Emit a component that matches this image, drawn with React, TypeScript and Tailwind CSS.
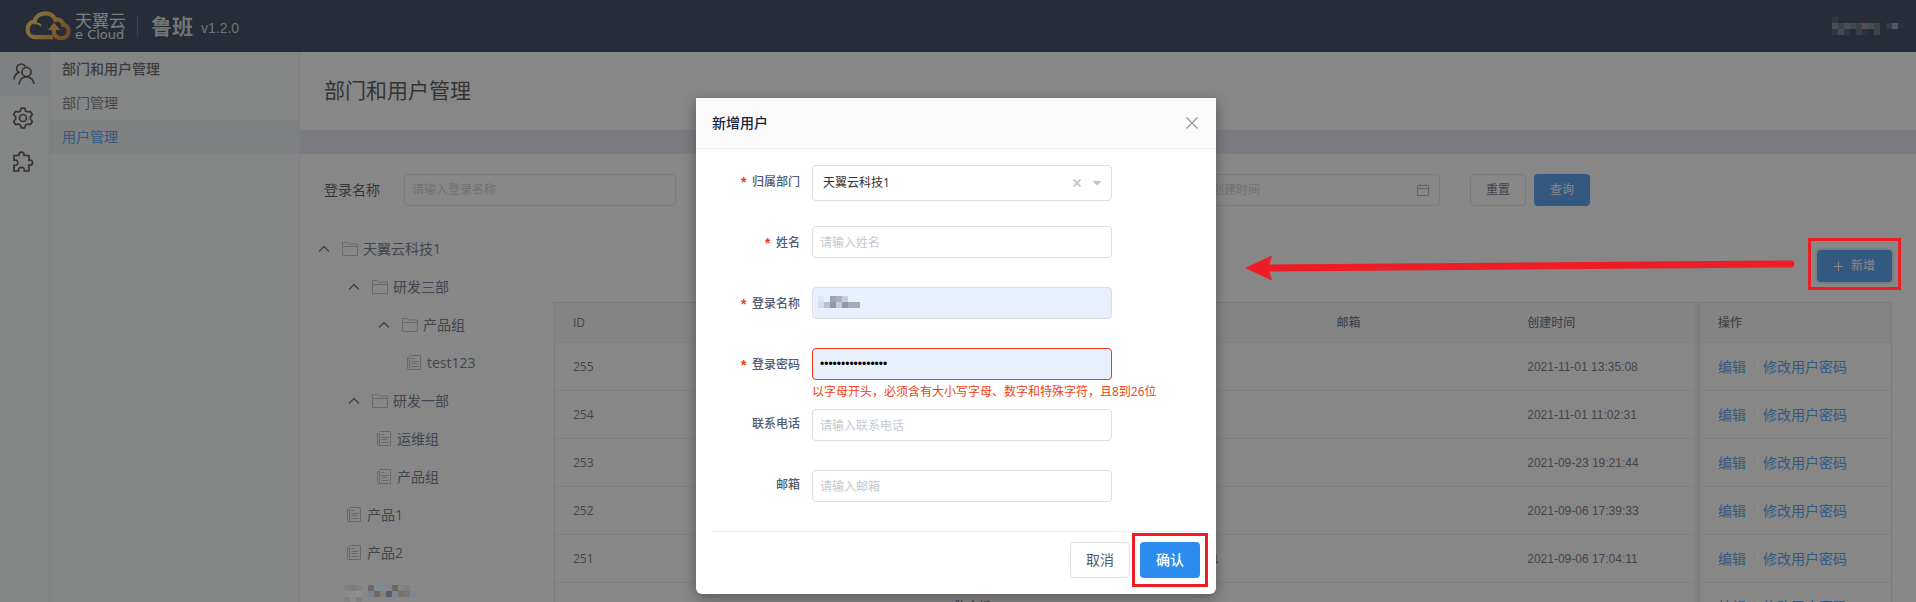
import React, { useState } from 'react';

const RED = '#ee1c24';

type Cell = [number, number, string];

function Mosaic({ cells, width, height, label }: { cells: Cell[]; width: number; height: number; label: string }) {
  return (
    <svg width={width} height={height} viewBox={`0 0 ${width} ${height}`} shapeRendering="crispEdges" role="img" aria-label={label} className="shrink-0">
      {cells.map(([x, y, fill]) => (
        <rect key={`${x}-${y}`} x={x * 6} y={y * 6} width={6} height={6} fill={fill} />
      ))}
    </svg>
  );
}

const accountCells: Cell[] = [
  [0, 0, '#303843'],
  [0, 1, '#465057'], [1, 1, '#3f3f45'], [2, 1, '#454f59'], [3, 1, '#3f4851'], [4, 1, '#3a434d'], [5, 1, '#5a4d56'], [6, 1, '#47504f'], [7, 1, '#3f4246'],
  [9, 1, '#2b3c4b'], [10, 1, '#53575c'], [11, 1, '#2a313c'],
  [0, 2, '#2e3946'], [1, 2, '#434f4d'], [2, 2, '#2d3641'], [4, 2, '#363e48'], [5, 2, '#2a313d'], [7, 2, '#3e4446'],
];

const treeIconCells: Cell[] = [
  [0, 0, '#7f7f7f'], [1, 0, '#7c7c7c'], [2, 0, '#808282'],
  [0, 1, '#8a8c8c'], [1, 1, '#8b8e8f'], [2, 1, '#8d9090'],
  [0, 2, '#808080'], [1, 2, '#8a8b8c'], [2, 2, '#7e7e7e'],
];

const treeNameCells: Cell[] = [
  [0, 0, '#6c676b'], [1, 0, '#808a95'], [2, 0, '#808a95'], [3, 0, '#83878a'], [4, 0, '#6a6a64'], [5, 0, '#838482'], [6, 0, '#817f77'],
  [0, 1, '#7a8388'], [1, 1, '#6b6b69'], [2, 1, '#8b7e75'], [3, 1, '#56606a'], [4, 1, '#80868c'], [5, 1, '#727470'], [6, 1, '#7d7572'], [7, 1, '#7c868d'],
];

const loginCells: Cell[] = [
  [0, 0, '#dde5f3'], [2, 0, '#9fa6b3'], [3, 0, '#a9aebb'], [4, 0, '#c8cedb'],
  [0, 1, '#d5dcea'], [1, 1, '#b9c0cd'], [2, 1, '#9299a6'], [3, 1, '#c4c9d8'], [4, 1, '#9299a4'], [5, 1, '#a4aab6'], [6, 1, '#a4aab6'],
];

function CloudLogo() {
  return (
    <svg width="46" height="30" viewBox="0 0 46 30" fill="none" aria-hidden="true">
      <defs>
        <linearGradient id="gold" x1="0" y1="0" x2="46" y2="30" gradientUnits="userSpaceOnUse">
          <stop offset="0" stopColor="#ffd84a" />
          <stop offset="0.5" stopColor="#f2a928" />
          <stop offset="1" stopColor="#cc5a00" />
        </linearGradient>
      </defs>
      <path
        d="M28 26.2H10.5C5.6 26.2 2.600 22.6 2.600 18.2C2.600 13.9 5.600 10.8 9.600 10.3C10.600 5.4 15 2.400 20.300 2.400C25.100 2.400 28.700 4.800 30.300 8.800C34.800 7.800 37.600 10 38.200 13.800C41.700 14.500 43.600 17 43.600 20.300C43.600 24.600 40.200 27.200 36.300 27.200C32 27.200 29 24.900 29 21V16"
        stroke="url(#gold)"
        strokeWidth="4.200"
      />
      <path d="M9.300 12.500C12.500 11.800 14.600 13 16 15" stroke="url(#gold)" strokeWidth="2" />
      <path d="M29 11.500L35 19H23Z" fill="#f2a020" />
    </svg>
  );
}

function PeopleIcon() {
  return (
    <svg width="22" height="22" viewBox="0 0 22 22" fill="none" stroke="#303133" strokeWidth="1.7" aria-hidden="true">
      <circle cx="13.500" cy="9" r="4.600" />
      <path d="M6.200 21.500C6.400 16.800 9.500 13.800 13.500 13.800C17.500 13.800 20.600 16.800 20.900 21" />
      <path d="M12.200 3.200C11.300 1.700 9.800 1 8.200 1C5.600 1 3.600 3 3.600 5.500C3.600 7.200 4.500 8.600 5.900 9.400C3 10.600 1.300 13 1.100 16.500" />
    </svg>
  );
}

function GearIcon() {
  return (
    <svg width="22" height="22" viewBox="0 0 22 22" fill="none" stroke="#303133" strokeWidth="1.700" strokeLinejoin="round" aria-hidden="true">
      <path d="M9.200 1.200H12.800L13.600 3.900L15.600 5L18.400 4.400L20.300 7.500L18.400 9.700V12.300L20.300 14.500L18.400 17.600L15.600 17L13.600 18.100L12.800 20.800H9.200L8.400 18.100L6.400 17L3.600 17.600L1.700 14.500L3.600 12.300V9.700L1.700 7.500L3.600 4.400L6.400 5L8.400 3.900Z" />
      <circle cx="11" cy="11" r="3.500" />
    </svg>
  );
}

function PuzzleIcon() {
  return (
    <svg width="22" height="22" viewBox="0 0 22 22" fill="none" stroke="#303133" strokeWidth="1.700" aria-hidden="true">
      <path d="M2 4.500H7C6.500 2.600 7.700 1.200 9.500 1.200C11.300 1.200 12.500 2.600 12 4.500H17V9.200C18.900 8.700 20.600 9.700 20.600 11.600C20.600 13.500 18.900 14.500 17 14V20H12.300C12.800 17.800 11.500 16.300 9.500 16.300C7.500 16.300 6.200 17.800 6.700 20H2V14.300C4.200 14.800 5.800 13.500 5.800 11.700C5.800 9.900 4.200 8.600 2 9.100Z" />
    </svg>
  );
}

function FolderIcon() {
  return (
    <svg width="16" height="14" viewBox="0 0 16 14" fill="none" stroke="#b3b5b8" aria-hidden="true">
      <path d="M0.500 13.500V0.500H5L6.500 2H15.500V13.500ZM0.500 4.500H15.500" />
    </svg>
  );
}

function DocIcon() {
  return (
    <svg width="14" height="16" viewBox="0 0 14 16" fill="none" stroke="#b3b5b8" aria-hidden="true">
      <path d="M2.500 0.500H13.500V14.500H1.500C0.900 14.500 0.500 14.100 0.500 13.500V2.500H2.500V14M4.500 3.500H7.500M4.500 6.500H11.500M4.500 8.500H10M4.500 11.500H11.500" />
    </svg>
  );
}

type Node = { name: string; indent: string; leaf?: boolean };

const nodes: Node[] = [
  { name: '天翼云科技1', indent: 'pl-0' },
  { name: '研发三部', indent: 'pl-[30px]' },
  { name: '产品组', indent: 'pl-[60px]' },
  { name: 'test123', indent: 'pl-[89px]', leaf: true },
  { name: '研发一部', indent: 'pl-[30px]' },
  { name: '运维组', indent: 'pl-[59px]', leaf: true },
  { name: '产品组', indent: 'pl-[59px]', leaf: true },
  { name: '产品1', indent: 'pl-[29px]', leaf: true },
  { name: '产品2', indent: 'pl-[29px]', leaf: true },
];

function Tree() {
  return (
    <ul className="-ml-1.5 w-[236px] shrink-0 text-sm text-[#515a6e]">
      {nodes.map((n, i) => (
        <li key={i} className={`flex h-[38px] items-center ${n.indent}`}>
          {n.leaf ? (
            <span className="mr-1.5 flex">
              <DocIcon />
            </span>
          ) : (
            <>
              <button type="button" aria-label={`收起${n.name}`} className="mr-3 flex w-3">
                <svg width="12" height="8" viewBox="0 0 12 8" fill="none" stroke="#515a6e" strokeWidth="1.500">
                  <path d="M1 6.500L6 1.500L11 6.500" />
                </svg>
              </button>
              <span className="mr-[5px] flex">
                <FolderIcon />
              </span>
            </>
          )}
          <span>{n.name}</span>
        </li>
      ))}
      <li className="relative z-20 flex items-start gap-1.5 pt-[13px] pl-[26px]">
        <Mosaic cells={treeIconCells} width={18} height={18} label="图标" />
        <Mosaic cells={treeNameCells} width={48} height={12} label="部门" />
      </li>
    </ul>
  );
}

const rows = [
  { id: '255', name: '', phone: '', time: '2021-11-01 13:35:08' },
  { id: '254', name: '', phone: '', time: '2021-11-01 11:02:31' },
  { id: '253', name: '', phone: '', time: '2021-09-23 19:21:44' },
  { id: '252', name: '', phone: '', time: '2021-09-06 17:39:33' },
  { id: '251', name: '', phone: '13800000001', time: '2021-09-06 17:04:11' },
  { id: '', name: '陈金斌', phone: '', time: '' },
];

const columns = ['ID', '登录名称', '姓名', '联系电话', '邮箱', '创建时间', '操作'];

const cell = 'border-b border-[#e8eaec] pl-[18px]';
const lastScrollingCell = 'border-r border-r-[#e0e2e5] bg-[linear-gradient(to_left,rgba(0,0,0,0.1),transparent_6px)]';

function UserTable() {
  return (
    <table className="w-full table-fixed border-separate border-spacing-0 border border-b-0 border-[#dcdee2] text-left text-xs text-[#515a6e]">
      <thead>
        <tr className="h-10 bg-[#f8f8f9]">
          {columns.map((c, i) => (
            <th key={c} className={`${cell} font-medium ${i === 5 ? lastScrollingCell : ''}`}>
              {c}
            </th>
          ))}
        </tr>
      </thead>
      <tbody>
        {rows.map((r) => (
          <tr key={r.id} className="h-12">
            <td className={cell}>{r.id}</td>
            <td className={cell} />
            <td className={cell}>{r.name}</td>
            <td className={`${cell} font-['Liberation_Sans',sans-serif]`}>{r.phone}</td>
            <td className={cell} />
            <td className={`${cell} ${lastScrollingCell} font-['Liberation_Sans',sans-serif]`}>{r.time}</td>
            <td className={`${cell} text-sm whitespace-nowrap`}>
              <div className="flex items-center gap-2">
                <a href="#edit" className="text-[#2d8cf0]">编辑</a>
                <span className="h-3 w-px bg-[#e8eaec]" />
                <a href="#password" className="text-[#2d8cf0]">修改用户密码</a>
              </div>
            </td>
          </tr>
        ))}
      </tbody>
    </table>
  );
}

function Filter({ id, label, placeholder, date }: { id: string; label: string; placeholder: string; date?: boolean }) {
  return (
    <div className="flex items-center">
      <label htmlFor={id} className="w-20 text-sm text-[#303133]">{label}</label>
      <div className="flex h-8 w-[272px] items-center rounded border border-[#dcdee2] bg-white px-[7px]">
        <input id={id} placeholder={placeholder} className="min-w-0 flex-1 bg-transparent text-xs outline-none placeholder:text-[#c5c8ce]" />
        {date && (
          <svg width="14" height="14" viewBox="0 0 14 14" fill="none" stroke="#a8abb2" className="mr-0.5" aria-hidden="true">
            <path d="M1.500 2.500H12.500V12.500H1.500ZM1.500 5.500H12.500M4.500 1V3M9.500 1V3" />
          </svg>
        )}
      </div>
    </div>
  );
}

function FormRow({ id, label, required, children }: { id: string; label: string; required?: boolean; children: React.ReactNode }) {
  return (
    <div className="flex h-8 items-start">
      <label htmlFor={id} className="flex w-[88px] shrink-0 items-center justify-end gap-1 pt-1.5 text-xs leading-[18px] font-medium text-[#515a6e]">
        {required && <span className="pt-1 font-['Liberation_Mono',monospace] text-sm leading-[18px] font-bold text-[#ed4014]">*</span>}
        {label}
      </label>
      <div className="relative ml-3 w-[300px]">{children}</div>
    </div>
  );
}

const inputBase = 'h-8 w-full rounded border px-[7px] text-xs outline-none placeholder:text-[#c5c8ce]';

function Modal() {
  const [password, setPassword] = useState('abcdEFGH12345678');
  return (
    <div role="dialog" aria-labelledby="modal-title" className="w-[520px] rounded-b-md bg-white shadow-[0_4px_14px_rgba(0,0,0,0.35)]">
      <div className="flex h-[51px] items-center justify-between border-b border-[#e8eaec] bg-[#fafafa] px-4">
        <h2 id="modal-title" className="text-sm font-medium text-[#17233d]">新增用户</h2>
        <button type="button" aria-label="关闭" className="mr-0.5">
          <svg width="12" height="12" viewBox="0 0 12 12" stroke="#999" strokeWidth="1.200">
            <path d="M0.500 0.500L11.500 11.500M11.500 0.500L0.500 11.500" />
          </svg>
        </button>
      </div>
      <form className="px-4 pt-4 pb-4" onSubmit={(e) => e.preventDefault()}>
        <div className="flex flex-col gap-[29px]">
          <FormRow id="dept" label="归属部门" required>
            <select id="dept" className="h-9 w-full appearance-none rounded border border-[#dcdee2] bg-white px-[10px] text-xs text-[#333] outline-none">
              <option>天翼云科技1</option>
            </select>
            <svg width="30" height="10" viewBox="0 0 30 10" className="pointer-events-none absolute top-[13px] right-[10px]" aria-hidden="true">
              <path d="M1.500 1.500L8.500 8.500M8.500 1.500L1.500 8.500" stroke="#c8c8c8" strokeWidth="1.800" />
              <path d="M20.500 3H29.500L25 7.500Z" fill="#c2c2c2" />
            </svg>
          </FormRow>
          <FormRow id="name" label="姓名" required>
            <input id="name" placeholder="请输入姓名" className={`${inputBase} border-[#dcdee2]`} />
          </FormRow>
          <FormRow id="login" label="登录名称" required>
            <input id="login" className={`${inputBase} border-[#dcdee2] bg-[#e8f0fe]`} />
            <span className="pointer-events-none absolute top-[9px] left-1.5">
              <Mosaic cells={loginCells} width={42} height={12} label="登录名称" />
            </span>
          </FormRow>
          <FormRow id="password" label="登录密码" required>
            <input
              id="password"
              type="password"
              value={password}
              onChange={(e) => setPassword(e.target.value)}
              className={`${inputBase} border-[#ed4014] bg-[#e8f0fe] font-['Liberation_Sans',sans-serif] text-black`}
            />
            <p className="absolute top-full left-0 pt-0.5 text-xs leading-5 whitespace-nowrap text-[#ed4014]">
              以字母开头，必须含有大小写字母、数字和特殊字符，且8到26位
            </p>
          </FormRow>
          <FormRow id="phone" label="联系电话">
            <input id="phone" placeholder="请输入联系电话" className={`${inputBase} border-[#dcdee2]`} />
          </FormRow>
          <FormRow id="mail" label="邮箱">
            <input id="mail" placeholder="请输入邮箱" className={`${inputBase} border-[#dcdee2]`} />
          </FormRow>
        </div>
        <div className="mt-[29px] flex justify-end gap-2.5 border-t border-[#e8eaec] pt-2.5">
          <button type="button" className="h-9 w-[60px] rounded border border-[#dcdee2] bg-white text-sm text-[#515a6e]">取消</button>
          <div className="relative">
            <button type="submit" className="h-9 w-[60px] rounded bg-[#2d8cf0] text-sm font-medium text-white">确认</button>
            <span className="pointer-events-none absolute -inset-x-2 -inset-y-[9px] border-3 border-[#ee1c24]" />
          </div>
        </div>
      </form>
    </div>
  );
}

export default function App() {
  return (
    <div className="relative flex h-screen flex-col overflow-hidden bg-white font-['Open_Sans','Noto_Sans_CJK_SC',sans-serif]">
      <header className="flex h-[52px] shrink-0 items-center bg-[#0e1f3c] pr-3 pl-[25px]">
        <CloudLogo />
        <div className="ml-1 w-[52px] whitespace-nowrap text-[#e6e6e6]">
          <div className="font-['Noto_Sans_CJK_SC',sans-serif] text-[17px] leading-[17px]">天翼云</div>
          <div className="font-['DejaVu_Sans',sans-serif] text-[13px] leading-[13px]">e Cloud</div>
        </div>
        <span className="ml-2.5 h-5 w-px bg-[#4a566b]" />
        <span className="ml-[13px] font-['Noto_Sans_CJK_SC',sans-serif] text-[21px] font-bold text-[#d0d0d0]">鲁班</span>
        <span className="ml-2 pt-1 font-['Liberation_Sans',sans-serif] text-sm text-[#c5c8ce]">v1.2.0</span>
        <span className="relative z-20 ml-auto">
          <Mosaic cells={accountCells} width={72} height={18} label="当前账号" />
        </span>
      </header>
      <div className="flex min-h-0 flex-1">
        <nav aria-label="主导航" className="w-[50px] shrink-0 border-r border-[#e4e7ed] bg-[#f7f9fb]">
          <a href="#users" aria-label="部门和用户" className="flex h-11 items-center justify-center bg-[#ebedef] pr-0.5"><PeopleIcon /></a>
          <a href="#settings" aria-label="设置" className="flex h-11 items-center justify-center pr-1"><GearIcon /></a>
          <a href="#plugins" aria-label="插件" className="flex h-11 items-center justify-center pr-1"><PuzzleIcon /></a>
        </nav>
        <nav aria-label="子导航" className="w-[250px] shrink-0 border-r border-[#e4e7ed] bg-[#f7f9fb] text-sm leading-[34px]">
          <div className="px-3 font-medium text-[#45484d]">部门和用户管理</div>
          <a href="#dept" className="block px-3 text-[#606266]">部门管理</a>
          <a href="#user" className="block bg-[#ebedf0] px-3 text-[#2d8cf0]">用户管理</a>
        </nav>
        <main className="flex min-w-0 flex-1 flex-col bg-[#e0e4ef]">
          <h1 className="mb-6 flex h-[78px] shrink-0 items-center bg-white px-6 text-[21px] text-[#303133]">部门和用户管理</h1>
          <section className="flex-1 bg-white px-6 pt-5">
            <div className="flex flex-nowrap items-center gap-[30px] whitespace-nowrap">
              <Filter id="f-login" label="登录名称" placeholder="请输入登录名称" />
              <Filter id="f-name" label="姓名" placeholder="请输入姓名" />
              <Filter id="f-time" label="创建时间" placeholder="请选择创建时间" date />
              <div className="flex gap-2">
                <button type="button" className="h-8 w-14 rounded border border-[#dcdee2] text-xs text-[#515a6e]">重置</button>
                <button type="button" className="h-8 w-14 rounded bg-[#2d8cf0] text-xs text-white">查询</button>
              </div>
            </div>
            <div className="flex pt-6">
              <Tree />
              <div className="min-w-0 flex-1 pt-5">
                <div className="mb-5 flex justify-end">
                  <div className="relative">
                    <button type="button" className="flex h-8 w-[75px] items-center justify-center gap-2 rounded bg-[#2d8cf0] text-xs text-white shadow-[0_0_0_2px_rgba(45,140,240,0.2)]">
                      <svg width="9" height="9" viewBox="0 0 9 9" stroke="currentColor" aria-hidden="true">
                        <path d="M4.500 0V9M0 4.500H9" />
                      </svg>
                      新增
                    </button>
                    <span className="pointer-events-none absolute -inset-x-[9px] -top-3 -bottom-2 z-20 border-3 border-[#ee1c24]" />
                    <svg width="550" height="28" viewBox="0 0 550 28" className="pointer-events-none absolute top-1 right-[97px] z-20" aria-hidden="true">
                      <path d="M22 14L546 10" stroke={RED} strokeWidth="7" strokeLinecap="round" />
                      <path d="M0 14L27 1.500L23.500 14L27 26.500Z" fill={RED} />
                    </svg>
                  </div>
                </div>
                <UserTable />
              </div>
            </div>
          </section>
        </main>
      </div>
      <div className="absolute inset-0 z-10 bg-[rgba(55,55,55,0.6)]" />
      <div className="pointer-events-none absolute inset-0 z-10 flex items-start justify-center pt-[98px] pr-1">
        <div className="pointer-events-auto">
          <Modal />
        </div>
      </div>
    </div>
  );
}
